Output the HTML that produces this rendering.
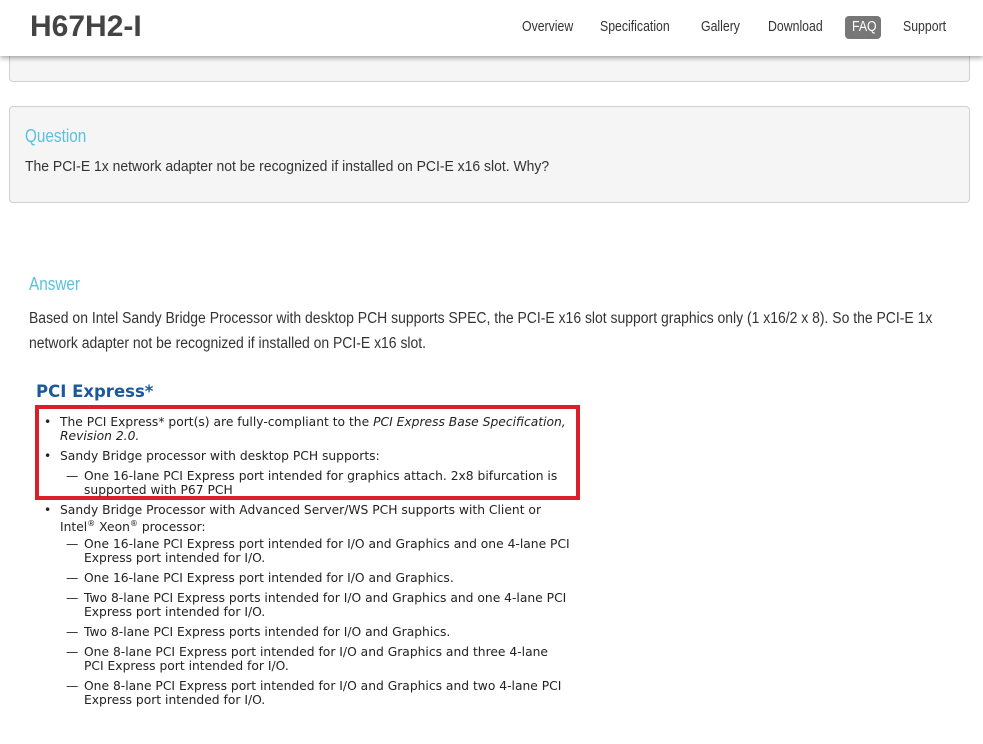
<!DOCTYPE html>
<html><head><meta charset="utf-8"><style>
body{margin:0;width:983px;height:744px;overflow:hidden;background:#fff;position:relative;font-family:"Liberation Sans",sans-serif;color:#333}
.a{position:absolute;white-space:nowrap}
.s{transform-origin:left top}
.box{position:absolute;background:#f5f5f5;border:1px solid #d0d0d0;border-radius:4px}
.hdr{position:absolute;left:0;top:0;width:983px;height:56px;background:#fff;box-shadow:0 2px 5px rgba(0,0,0,.35);z-index:2}
.nav{position:absolute;top:18px;font-size:15px;color:#333;line-height:18px;transform:scaleX(0.82);transform-origin:left top;white-space:nowrap}
.img{font-family:"DejaVu Sans",Verdana,sans-serif;font-size:12.3px;color:#222;line-height:14px}
</style></head><body>
<div class="box" style="left:9px;top:40px;width:959px;height:40px"></div>
<div class="hdr">
<div class="a" style="left:30px;top:9px;font-weight:bold;font-size:30px;color:#444;line-height:36px">H67H2-I</div>
<div class="nav" style="left:522px">Overview</div>
<div class="nav" style="left:600px">Specification</div>
<div class="nav" style="left:701px">Gallery</div>
<div class="nav" style="left:768px">Download</div>
<div class="a" style="left:845px;top:16px;width:36px;height:23px;background:#777;border-radius:4px"></div>
<div class="nav" style="left:852px;color:#fff">FAQ</div>
<div class="nav" style="left:903px">Support</div>
</div>
<div class="box" style="left:9px;top:106px;width:959px;height:95px"></div>
<div class="a s" style="left:25px;top:125px;font-size:18px;color:#5bc0de;line-height:22px;transform:scaleX(0.85)">Question</div>
<div class="a s" style="left:25px;top:158px;font-size:15px;line-height:18px;transform:scaleX(0.93)">The PCI-E 1x network adapter not be recognized if installed on PCI-E x16 slot. Why?</div>
<div class="a s" style="left:29px;top:273px;font-size:18px;color:#5bc0de;line-height:22px;transform:scaleX(0.85)">Answer</div>
<div class="a s" style="left:29px;top:306px;font-size:15.5px;line-height:25px;transform:scaleX(0.9)">Based on Intel Sandy Bridge Processor with desktop PCH supports SPEC, the PCI-E x16 slot support graphics only (1 x16/2 x 8). So the PCI-E 1x<br>network adapter not be recognized if installed on PCI-E x16 slot.</div>
<div class="a" style="left:36px;top:382px;font-family:'DejaVu Sans',sans-serif;font-weight:bold;font-size:16.5px;color:#1a5a9a">PCI Express*</div>
<div class="a" style="left:35px;top:405px;width:537px;height:87px;border:4px solid #d9202a"></div>
<div class="a img" style="left:44px;top:415px">•</div>
<div class="a img" style="left:60px;top:415px">The PCI Express* port(s) are fully-compliant to the <i>PCI Express Base Specification,</i><br><i>Revision 2.0.</i></div>
<div class="a img" style="left:44px;top:449px">•</div>
<div class="a img" style="left:60px;top:449px">Sandy Bridge processor with desktop PCH supports:</div>
<div class="a img" style="left:66px;top:469px">—</div>
<div class="a img" style="left:84px;top:469px">One 16-lane PCI Express port intended for graphics attach. 2x8 bifurcation is<br>supported with P67 PCH</div>
<div class="a img" style="left:44px;top:503px">•</div>
<div class="a img" style="left:60px;top:503px">Sandy Bridge Processor with Advanced Server/WS PCH supports with Client or<br>Intel<sup style="font-size:8px">®</sup> Xeon<sup style="font-size:8px">®</sup> processor:</div>
<div class="a img" style="left:66px;top:537px">—</div>
<div class="a img" style="left:84px;top:537px">One 16-lane PCI Express port intended for I/O and Graphics and one 4-lane PCI<br>Express port intended for I/O.</div>
<div class="a img" style="left:66px;top:571px">—</div>
<div class="a img" style="left:84px;top:571px">One 16-lane PCI Express port intended for I/O and Graphics.</div>
<div class="a img" style="left:66px;top:591px">—</div>
<div class="a img" style="left:84px;top:591px">Two 8-lane PCI Express ports intended for I/O and Graphics and one 4-lane PCI<br>Express port intended for I/O.</div>
<div class="a img" style="left:66px;top:625px">—</div>
<div class="a img" style="left:84px;top:625px">Two 8-lane PCI Express ports intended for I/O and Graphics.</div>
<div class="a img" style="left:66px;top:645px">—</div>
<div class="a img" style="left:84px;top:645px">One 8-lane PCI Express port intended for I/O and Graphics and three 4-lane<br>PCI Express port intended for I/O.</div>
<div class="a img" style="left:66px;top:679px">—</div>
<div class="a img" style="left:84px;top:679px">One 8-lane PCI Express port intended for I/O and Graphics and two 4-lane PCI<br>Express port intended for I/O.</div>
</body></html>
